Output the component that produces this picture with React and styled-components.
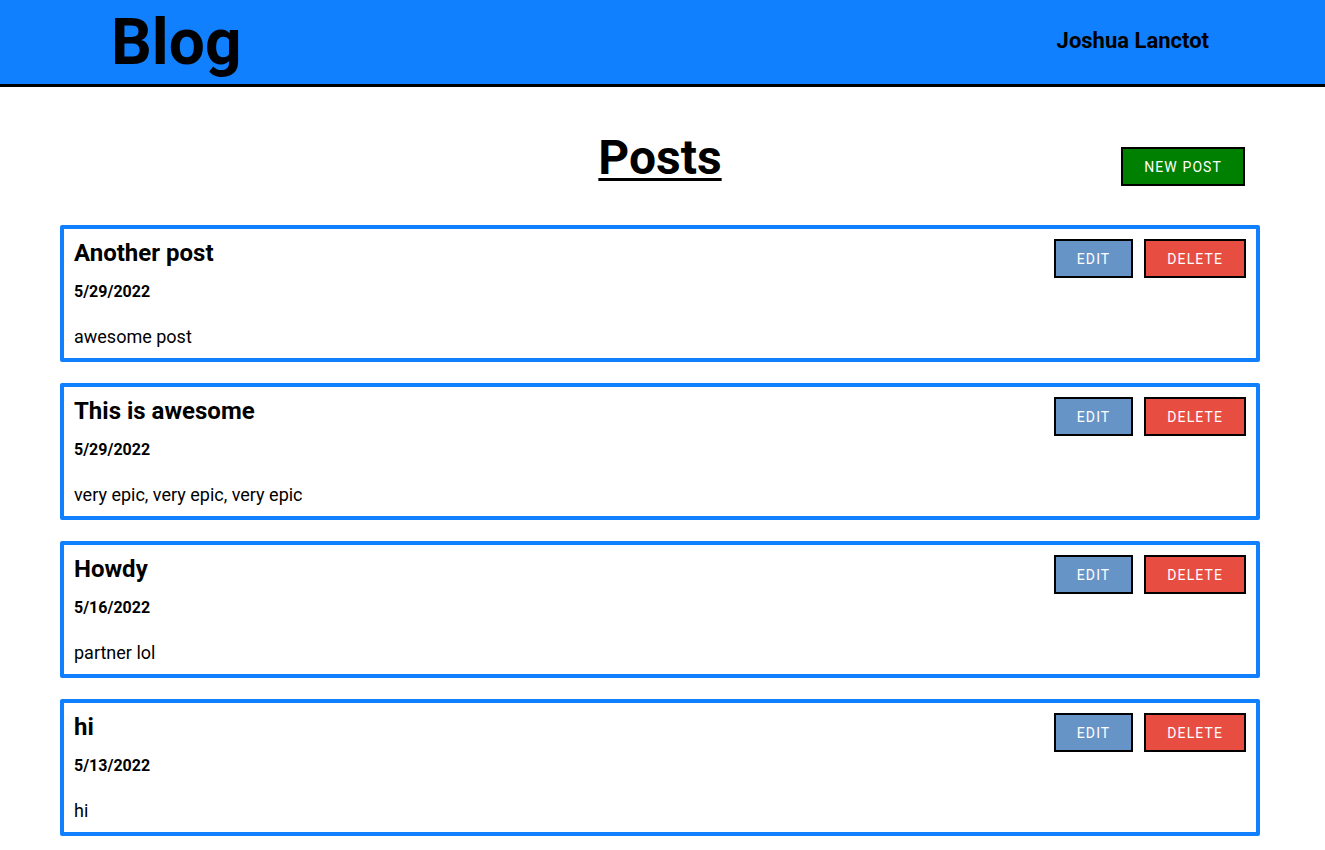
import { createGlobalStyle, styled } from "styled-components";

const GlobalStyle = createGlobalStyle`
    body {
        margin: 0;
        font-family: Roboto, "Liberation Sans", sans-serif;
        background: #ffffff;
        color: #000000;
    }
`;

const Cabecalho = styled.header`
    height: 84px;
    background: #1180ff;
    border-bottom: 3px solid #000;
    display: flex;
    align-items: center;
    justify-content: space-between;
    padding: 0 116px 0 111px;
`;

const Logo = styled.h1`
    margin: 0;
    font-size: 64px;
    font-weight: 700;
    line-height: 1;
    margin-top: 2px;
`;

const Autor = styled.span`
    font-size: 22px;
    font-weight: 700;
    margin-top: -3px;
`;

const Principal = styled.main`
    width: 1200px;
    margin-left: 60px;
    padding-top: 40px;
`;

const Topo = styled.div`
    position: relative;
    display: flex;
    justify-content: center;
    align-items: flex-start;
    height: 78px;
    margin-bottom: 20px;
`;

const Titulo = styled.h2`
    margin: 2px 0 0;
    font-size: 48px;
    font-weight: 700;
    text-decoration: underline;
    text-underline-offset: 4px;
    text-decoration-thickness: 3px;
`;

const Botao = styled.button`
    font-family: Roboto, "Liberation Sans", sans-serif;
    font-size: 14px;
    font-weight: 400;
    letter-spacing: 1.1px;
    text-transform: uppercase;
    color: #fff;
    background: ${props => props.$cor};
    border: 2px solid #000;
    height: 39px;
    padding: 0 21px;
    cursor: pointer;
`;

const BotaoNovo = styled(Botao)`
    position: absolute;
    right: 15px;
    top: 20px;
`;

const ListaPosts = styled.div`
    display: flex;
    flex-direction: column;
    gap: 21px;
    padding-bottom: 20px;
`;

const Cartao = styled.article`
    border: 4px solid #1180ff;
    border-radius: 2px;
    padding: 10px;
    height: 137px;
    box-sizing: border-box;
    display: flex;
    flex-direction: column;
`;

const LinhaCartao = styled.div`
    display: flex;
    justify-content: space-between;
    align-items: flex-start;
`;

const NomePost = styled.h3`
    margin: 0;
    font-size: 24px;
    font-weight: 700;
    line-height: 28px;
`;

const Acoes = styled.div`
    display: flex;
    gap: 11px;
`;

const Data = styled.div`
    font-size: 16px;
    font-weight: 700;
    margin-top: 4px;
`;

const Texto = styled.p`
    margin: 25px 0 0;
    font-size: 18px;
`;

const posts = [
    { id: 1, nome: "Another post", data: "5/29/2022", texto: "awesome post" },
    { id: 2, nome: "This is awesome", data: "5/29/2022", texto: "very epic, very epic, very epic" },
    { id: 3, nome: "Howdy", data: "5/16/2022", texto: "partner lol" },
    { id: 4, nome: "hi", data: "5/13/2022", texto: "hi" },
];

const App = () => {

    return (
        <>
            <GlobalStyle />
            <Cabecalho>
                <Logo>Blog</Logo>
                <Autor>Joshua Lanctot</Autor>
            </Cabecalho>
            <Principal>
                <Topo>
                    <Titulo>Posts</Titulo>
                    <BotaoNovo $cor="#008000">New Post</BotaoNovo>
                </Topo>
                <ListaPosts>
                    {posts.map(post =>
                        <Cartao key={post.id}>
                            <LinhaCartao>
                                <NomePost>{post.nome}</NomePost>
                                <Acoes>
                                    <Botao $cor="#6794c6">Edit</Botao>
                                    <Botao $cor="#e84d42">Delete</Botao>
                                </Acoes>
                            </LinhaCartao>
                            <Data>{post.data}</Data>
                            <Texto>{post.texto}</Texto>
                        </Cartao>
                    )}
                </ListaPosts>
            </Principal>
        </>
    );
};

export default App;
